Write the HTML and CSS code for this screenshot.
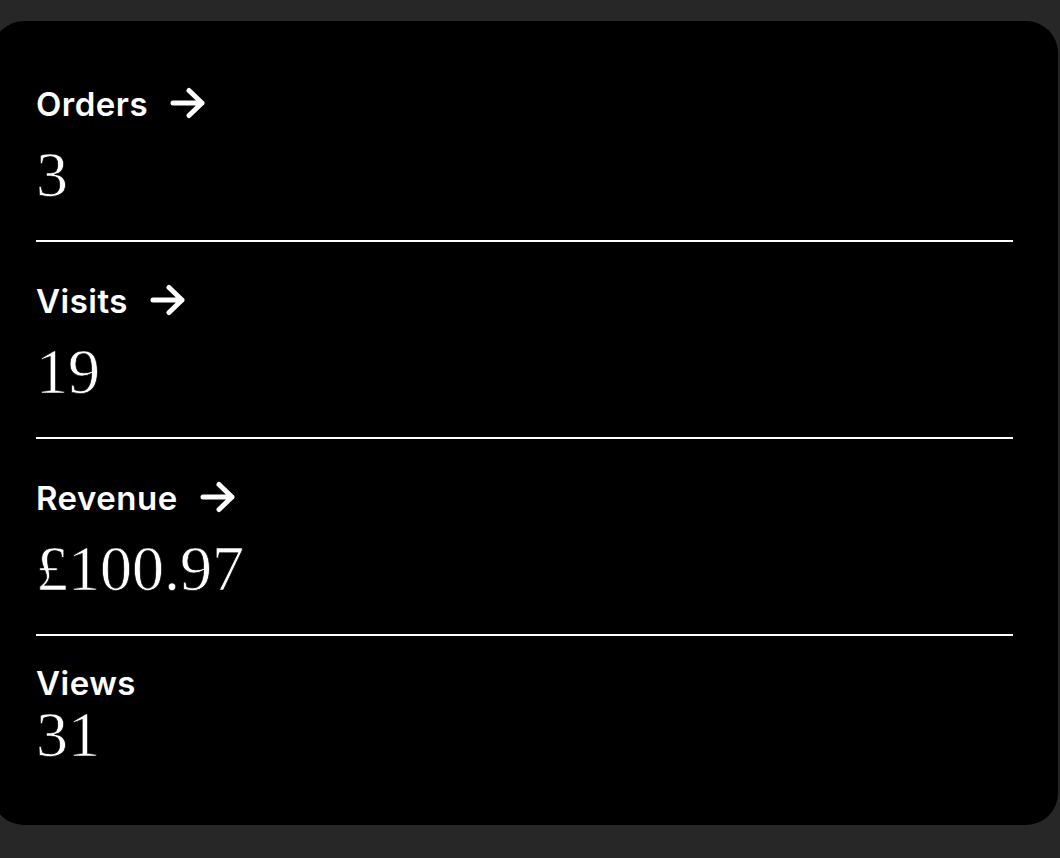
FILE: index.html
```html
<!DOCTYPE html>
<html lang="en">
<head>
<meta charset="utf-8">
<title>Stats</title>
<link rel="stylesheet" href="styles.css">
</head>
<body>
<div class="card">
  <div class="stat">
    <a class="label" href="#">Orders
      <svg class="arrow" width="36" height="32" viewBox="0 0 36 32"><path d="M3 16H32M19 3.5L32 16L19 28.5" fill="none" stroke="#fff" stroke-width="5" stroke-linecap="round" stroke-linejoin="round"/></svg>
    </a>
    <div class="value">3</div>
  </div>
  <div class="stat">
    <a class="label" href="#">Visits
      <svg class="arrow" width="36" height="32" viewBox="0 0 36 32"><path d="M3 16H32M19 3.5L32 16L19 28.5" fill="none" stroke="#fff" stroke-width="5" stroke-linecap="round" stroke-linejoin="round"/></svg>
    </a>
    <div class="value">19</div>
  </div>
  <div class="stat">
    <a class="label" href="#">Revenue
      <svg class="arrow" width="36" height="32" viewBox="0 0 36 32"><path d="M3 16H32M19 3.5L32 16L19 28.5" fill="none" stroke="#fff" stroke-width="5" stroke-linecap="round" stroke-linejoin="round"/></svg>
    </a>
    <div class="value">£100.97</div>
  </div>
  <div class="stat stat-last">
    <div class="label">Views</div>
    <div class="value">31</div>
  </div>
</div>
</body>
</html>
```
FILE: styles.css
```css
html, body {
  margin: 0;
  padding: 0;
  background: #272727;
}
body {
  height: 858px;
  overflow: hidden;
}
.card {
  box-sizing: border-box;
  margin: 21px 0 0 -8px;
  width: 1066px;
  height: 804px;
  background: #000;
  border-radius: 32px;
  padding: 24px 45px 24px 44px;
  color: #fff;
}
.stat {
  padding: 39px 0 33px;
  border-bottom: 2px solid #fff;
  display: flex;
  flex-direction: column;
  align-items: flex-start;
  gap: 19px;
}
.stat-last {
  border-bottom: none;
  padding: 27px 0 32px;
  gap: 0;
}
.label {
  display: flex;
  align-items: center;
  gap: 22px;
  font-family: Inter, "Noto Sans", sans-serif;
  font-weight: 600;
  font-size: 33px;
  letter-spacing: 0.5px;
  line-height: 40px;
  color: #fff;
  text-decoration: none;
}
.arrow {
  display: block;
  margin-top: -3px;
}
.value {
  font-family: "Liberation Serif", serif;
  font-size: 64px;
  line-height: 64px;
  font-weight: 400;
  -webkit-text-stroke: 0.7px #000;
}
```
